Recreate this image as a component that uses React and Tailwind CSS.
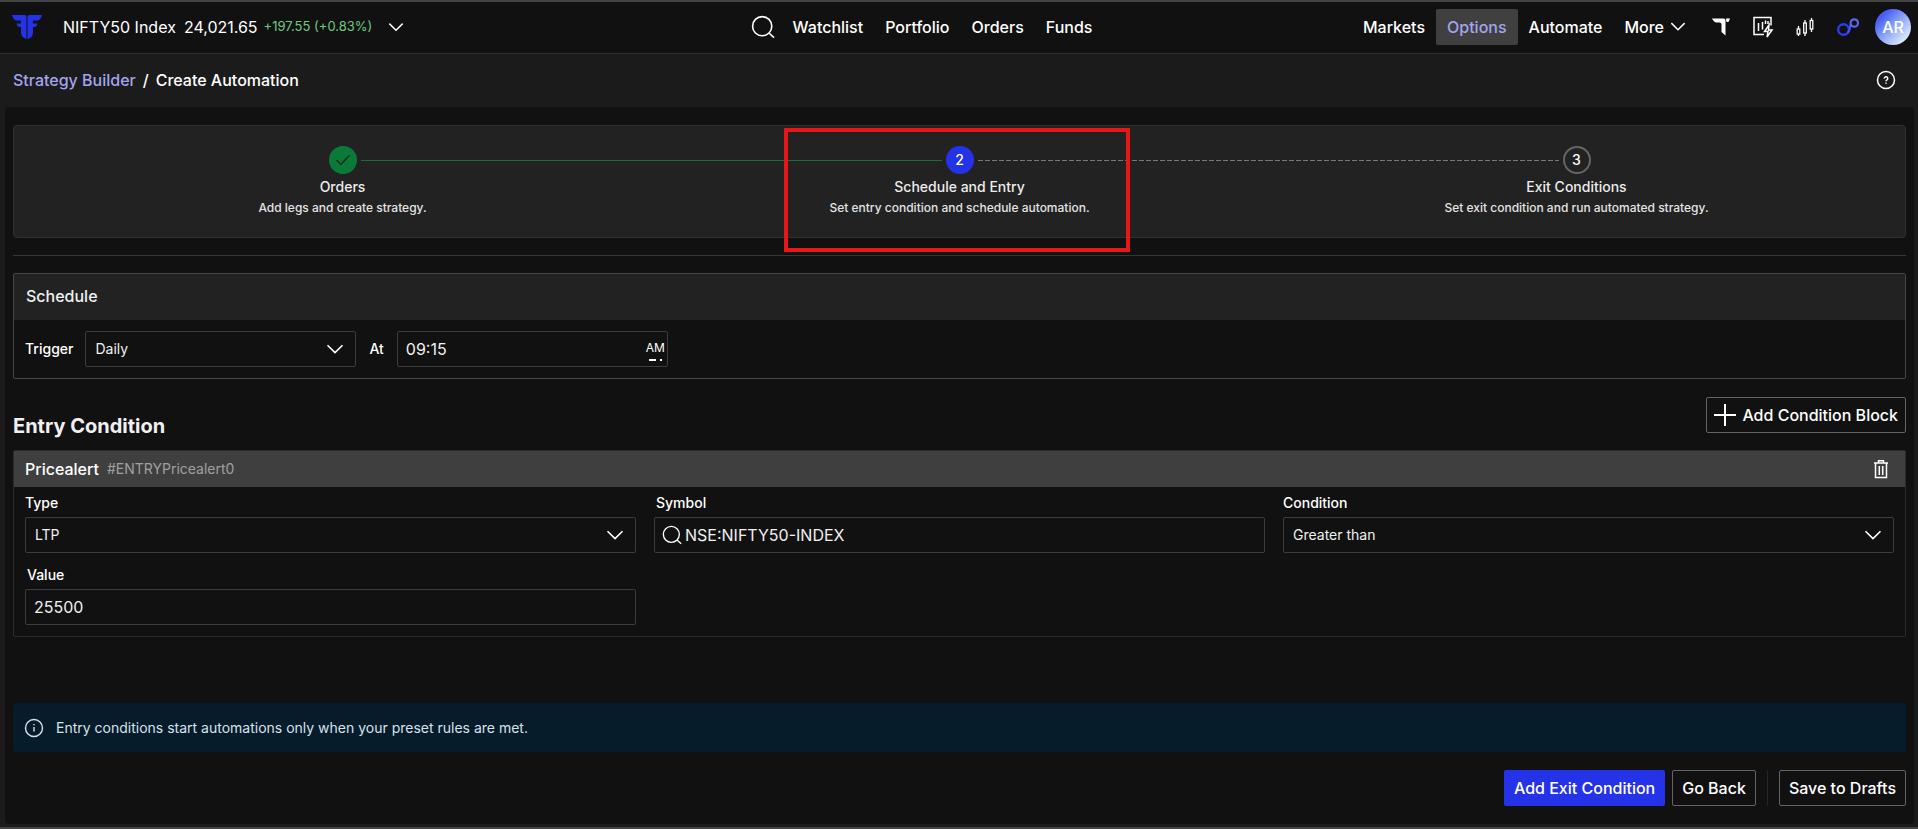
import React, { useState } from 'react';
import clsx from 'clsx';

const Chevron = ({ className }) => (
    <svg viewBox="0 0 18 10" fill="none" stroke="currentColor" strokeWidth="1.6" className={className} aria-hidden="true">
        <path d="M1.5 1.2 9 8.6l7.5-7.4" />
    </svg>
);

const SearchIcon = ({ className }) => (
    <svg viewBox="0 0 24 24" fill="none" stroke="currentColor" strokeWidth="1.6" className={className} aria-hidden="true">
        <circle cx="11.2" cy="11.2" r="9.6" />
        <path d="m18 18 5 4.6" />
    </svg>
);

const Logo = () => (
    <svg viewBox="0 0 30 24" className="h-6 w-[30px]" aria-hidden="true">
        <g fill="#2433e8">
            <path d="M0 0h12.5q2 0 2 2v22Q9 22.500 9 17.500V12H7.500Q5.500 12 4.500 8.500H9V5.500H4Q1 4.500 0 0z" />
            <path d="M30 0H17.500q-2 0-2 2v22Q21 22.500 21 17.500V12h1.500q2 0 3-3.500H21V5.500h5Q29 4.500 30 0z" />
        </g>
    </svg>
);

const TradeIcon = () => (
    <svg viewBox="0 0 20 18" className="h-[18px] w-5" fill="#fff" aria-hidden="true">
        <path d="M1 .5h11.500q2 0 2 2v15l-4-3.500V6.500q0-2-2-2H5.500Q3 4.500 1 .5z" />
        <path d="M15 .5h4l-1.500 3.500h-2z" />
    </svg>
);

const ScalperIcon = () => (
    <svg viewBox="0 0 22 22" className="size-[22px]" fill="none" stroke="#fff" strokeWidth="1.5" aria-hidden="true">
        <path d="M12 18.500H2V1.500h17v8" />
        <path d="M6.500 7v8M10.500 6v7.500M13.500 4.500V8M16 5v3" />
        <path d="m17 9-4.500 6.500H16L15 21l5-7h-3.500z" />
    </svg>
);

const CandlesIcon = () => (
    <svg viewBox="0 0 20 20" className="size-5" fill="none" stroke="#fff" strokeWidth="1.3" aria-hidden="true">
        <path d="M3.500 9v3M3.500 17v2M10 3v3M10 16v3M16.500 1v2.500M16.500 12v3" />
        <rect x="2.2" y="12" width="2.6" height="5" />
        <rect x="8.7" y="6" width="2.6" height="10" />
        <rect x="15.2" y="3.5" width="2.6" height="8.5" />
    </svg>
);

const LinkIcon = () => (
    <svg viewBox="0 0 24 20" className="h-5 w-6" fill="none" aria-hidden="true">
        <circle cx="7.5" cy="12.5" r="5.3" stroke="#2b3cf0" strokeWidth="2.4" />
        <path d="M11.500 16C15 13.500 13 9.500 15 7" stroke="#4553f5" strokeWidth="2.2" />
        <circle cx="18.3" cy="6" r="3.7" stroke="#5a66f2" strokeWidth="2.2" />
    </svg>
);

const TrashIcon = () => (
    <svg viewBox="0 0 16 20" className="h-5 w-4" fill="none" stroke="#fff" strokeWidth="1.5" aria-hidden="true">
        <path d="M1 4h14M5.500 4V1.700h5V4M2.500 4v14.500h11V4M6.300 7v9M9.700 7v9" />
    </svg>
);

const NAV = ['Watchlist', 'Portfolio', 'Orders', 'Funds'];

const STEPS = [
    { title: 'Orders', text: 'Add legs and create strategy.', state: 'done' },
    { title: 'Schedule and Entry', text: 'Set entry condition and schedule automation.', state: 'active' },
    { title: 'Exit Conditions', text: 'Set exit condition and run automated strategy.', state: 'todo' }
];

const fieldBox = 'h-9 w-full rounded-xs border border-[#3c3c3c] bg-transparent text-[#f0f0f0] outline-none';
const outlineButton = 'flex h-9 items-center rounded-xs border border-[#646464] text-base font-medium text-white';

const Select = ({ id, options }) => (
    <div className="relative">
        <select id={id} className={clsx(fieldBox, 'appearance-none pl-[9px] pr-9 text-sm')}>
            {options.map((option) => (
                <option key={option} className="bg-[#111]">{option}</option>
            ))}
        </select>
        <Chevron className="pointer-events-none absolute right-3 top-[13px] h-[10px] w-[18px] text-white" />
    </div>
);

const Connector = ({ kind }) => (
    <span
        className={clsx('h-px flex-1', {
            'bg-[#16703a]': kind === 'done',
            'bg-[repeating-linear-gradient(90deg,#777_0_5px,transparent_5px_7px)]': kind === 'todo'
        })}
    />
);

const Step = ({ step, index }) => {
    const { title, text, state } = step;
    return (
        <li className="relative flex flex-col items-center">
            <div className="flex w-full items-center gap-1">
                <Connector kind={index === 1 ? 'done' : index === 2 ? 'todo' : 'none'} />
                <span
                    className={clsx('flex size-7 items-center justify-center rounded-full text-sm font-medium text-white', {
                        'bg-[#0b7a38]': state === 'done',
                        'bg-[#2433e8]': state === 'active',
                        'border-2 border-[#646464]': state === 'todo'
                    })}
                >
                    {state === 'done' ? (
                        <svg viewBox="0 0 18 14" className="h-3 w-4" fill="none" stroke="#0c2a18" strokeWidth="1.6">
                            <path d="m1.500 7 5 5.200L16.500 1.500" />
                        </svg>
                    ) : (
                        index + 1
                    )}
                </span>
                <Connector kind={index === 0 ? 'done' : index === 1 ? 'todo' : 'none'} />
            </div>
            <h3 className="mt-1 text-sm font-medium leading-[18px] text-[#ececec]">{title}</h3>
            <p className="mt-[3px] text-xs font-medium leading-[18px] text-[#e4e4e4]">{text}</p>
            {state === 'active' && (
                <div className="pointer-events-none absolute -top-[18px] left-1/2 -ml-[176px] h-[124px] w-[346px] border-4 border-[#e61717]" />
            )}
        </li>
    );
};

const TopBar = () => (
    <header className="flex h-[54px] items-center justify-between border-b border-t-2 border-b-[#303030] border-t-[#444] bg-[#111] pb-0.5 pl-3 pr-[7px] text-base text-white">
        <div className="flex flex-1 items-center">
            <Logo />
            <span className="ml-[21px]">NIFTY50 Index</span>
            <span className="ml-2">24,021.65</span>
            <span className="ml-1.5 text-[13px] text-[#6fca80]">+197.55 (+0.83%)</span>
            <button type="button" aria-label="Choose index" className="ml-4">
                <Chevron className="h-[10px] w-4" />
            </button>
        </div>
        <nav className="mr-20 flex items-center gap-[22px] font-medium">
            <button type="button" aria-label="Search" className="-mr-1">
                <SearchIcon className="size-6" />
            </button>
            {NAV.map((item) => (
                <a key={item} href="#">{item}</a>
            ))}
        </nav>
        <div className="flex flex-1 items-center justify-end font-medium">
            <a href="#" className="px-[11px]">Markets</a>
            <a href="#" className="flex h-9 items-center rounded-xs bg-[#404040] px-[11px] text-[#a3a5ee]">Options</a>
            <a href="#" className="px-[11px]">Automate</a>
            <button type="button" className="flex items-center gap-1.5 px-[11px]">
                More
                <Chevron className="h-[9px] w-4" />
            </button>
            <div className="ml-3.5 flex items-center gap-[21px]">
                <a href="#" aria-label="Trade"><TradeIcon /></a>
                <a href="#" aria-label="Scalper"><ScalperIcon /></a>
                <a href="#" aria-label="Charts"><CandlesIcon /></a>
                <a href="#" aria-label="Connect"><LinkIcon /></a>
            </div>
            <button type="button" className="ml-[15px] size-9 rounded-full bg-linear-to-br from-[#4a5cf5] from-20% via-[#98aef6] via-55% to-[#eaf4f8] to-90%">
                AR
            </button>
        </div>
    </header>
);

const App = () => {
    const [time, setTime] = useState('09:15');
    const [symbol, setSymbol] = useState('NSE:NIFTY50-INDEX');
    const [value, setValue] = useState('25500');

    return (
        <div className="flex min-h-screen flex-col border-b-2 border-[#444] bg-[#1b1b1b] font-['Inter',sans-serif] text-white">
            <TopBar />

            <div className="flex h-[53px] items-center justify-between pb-0.5 pl-[13px] pr-[22px] text-base font-medium">
                <div className="flex gap-[7px]">
                    <a href="#" className="text-[#a3a5ee]">Strategy Builder</a>
                    <span>/</span>
                    <span>Create Automation</span>
                </div>
                <button type="button" aria-label="Help">
                    <svg viewBox="0 0 20 20" className="size-5" fill="none" stroke="#fff" strokeWidth="1.5">
                        <circle cx="10" cy="10" r="8.5" />
                        <path d="M8.300 8.500a1.700 1.700 0 1 1 2.700 1.300c-.7.400-1 .7-1 1.400M10 12.400v1.300" />
                    </svg>
                </button>
            </div>

            <main className="mb-[3px] ml-[5px] mr-1 flex flex-1 flex-col rounded bg-[#111] px-2 pb-[18px] pt-[18px]">
                <ol className="grid grid-cols-3 rounded border border-[#303030] bg-[#222] px-5 pb-5 pt-5">
                    {STEPS.map((step, index) => (
                        <Step key={step.title} step={step} index={index} />
                    ))}
                </ol>

                <hr className="mt-[17px] border-[#363636]" />

                <section className="mt-[17px] rounded-xs border border-[#464646]">
                    <h2 className="flex h-[46px] items-center bg-[#222] px-3 pb-0.5 text-base font-medium text-[#f0f0f0]">Schedule</h2>
                    <div className="flex items-center px-[11px] py-[11px] text-sm">
                        <label htmlFor="trigger" className="mr-3 font-medium">Trigger</label>
                        <div className="w-[271px]">
                            <Select id="trigger" options={['Daily', 'Weekly', 'Once']} />
                        </div>
                        <label htmlFor="time" className="mx-[13px] font-medium">At</label>
                        <div className="relative w-[271px]">
                            <input
                                id="time"
                                type="text"
                                value={time}
                                onChange={(e) => setTime(e.target.value)}
                                className={clsx(fieldBox, 'pl-2 pr-10 text-base')}
                            />
                            <div className="pointer-events-none absolute right-[3px] top-2 flex flex-col items-center gap-0.5">
                                <span className="text-xs leading-[18px]">AM</span>
                                <span className="flex gap-1">
                                    <i className="h-0.5 w-[7px] bg-white" />
                                    <i className="size-0.5 bg-white" />
                                </span>
                            </div>
                        </div>
                    </div>
                </section>

                <div className="mt-[18px] flex items-start justify-between">
                    <h2 className="mt-[15px] text-xl font-bold text-[#f0f0f0]">Entry Condition</h2>
                    <button type="button" className={clsx(outlineButton, 'gap-1.5 px-[7px]')}>
                        <svg viewBox="0 0 22 22" className="size-[22px]" stroke="currentColor" strokeWidth="2" aria-hidden="true">
                            <path d="M11 0v22M0 11h22" />
                        </svg>
                        Add Condition Block
                    </button>
                </div>

                <section className="mt-2.5 rounded-xs border border-[#2c2c2c]">
                    <div className="flex h-9 items-center bg-[#3f3f3f] pl-[11px] pr-4">
                        <h3 className="text-base font-medium">Pricealert</h3>
                        <span className="ml-2 text-sm text-[#a0a0a0]">#ENTRYPricealert0</span>
                        <button type="button" aria-label="Delete condition" className="ml-auto">
                            <TrashIcon />
                        </button>
                    </div>
                    <div className="grid grid-cols-3 gap-x-[18px] gap-y-3 px-[11px] pb-[11px] pt-1.5">
                        <div>
                            <label htmlFor="type" className="mb-1 block text-sm font-medium">Type</label>
                            <Select id="type" options={['LTP', 'Open', 'Close']} />
                        </div>
                        <div>
                            <label htmlFor="symbol" className="mb-1 block pl-0.5 text-sm font-medium">Symbol</label>
                            <div className="relative">
                                <SearchIcon className="absolute left-2 top-2 size-5" />
                                <input
                                    id="symbol"
                                    type="text"
                                    value={symbol}
                                    onChange={(e) => setSymbol(e.target.value)}
                                    className={clsx(fieldBox, 'pl-[30px] pr-2 text-base')}
                                />
                            </div>
                        </div>
                        <div>
                            <label htmlFor="condition" className="mb-1 block text-sm font-medium">Condition</label>
                            <Select id="condition" options={['Greater than', 'Less than', 'Equal to']} />
                        </div>
                        <div>
                            <label htmlFor="value" className="mb-1 block pl-0.5 text-sm font-medium">Value</label>
                            <input
                                id="value"
                                type="text"
                                value={value}
                                onChange={(e) => setValue(e.target.value)}
                                className={clsx(fieldBox, 'px-2 text-base')}
                            />
                        </div>
                    </div>
                </section>

                <div className="mt-auto flex h-[49px] items-center gap-3 rounded-xs bg-[#061c2a] px-[11px] text-sm text-[#d6e3ec]">
                    <svg viewBox="0 0 20 20" className="size-5" fill="none" stroke="currentColor" strokeWidth="1.4" aria-hidden="true">
                        <circle cx="10" cy="10" r="8.5" />
                        <path d="M10 9v4.500M10 6v1.300" />
                    </svg>
                    Entry conditions start automations only when your preset rules are met.
                </div>

                <div className="mt-[18px] flex justify-end">
                    <button type="button" className="h-9 rounded-xs bg-[#2433e8] px-2.5 text-base font-medium">Add Exit Condition</button>
                    <button type="button" className={clsx(outlineButton, 'ml-[7px] px-[9px]')}>Go Back</button>
                    <span className="mx-[11px] w-px bg-[#262626]" />
                    <button type="button" className={clsx(outlineButton, 'px-[9px]')}>Save to Drafts</button>
                </div>
            </main>
        </div>
    );
};

export default App;
